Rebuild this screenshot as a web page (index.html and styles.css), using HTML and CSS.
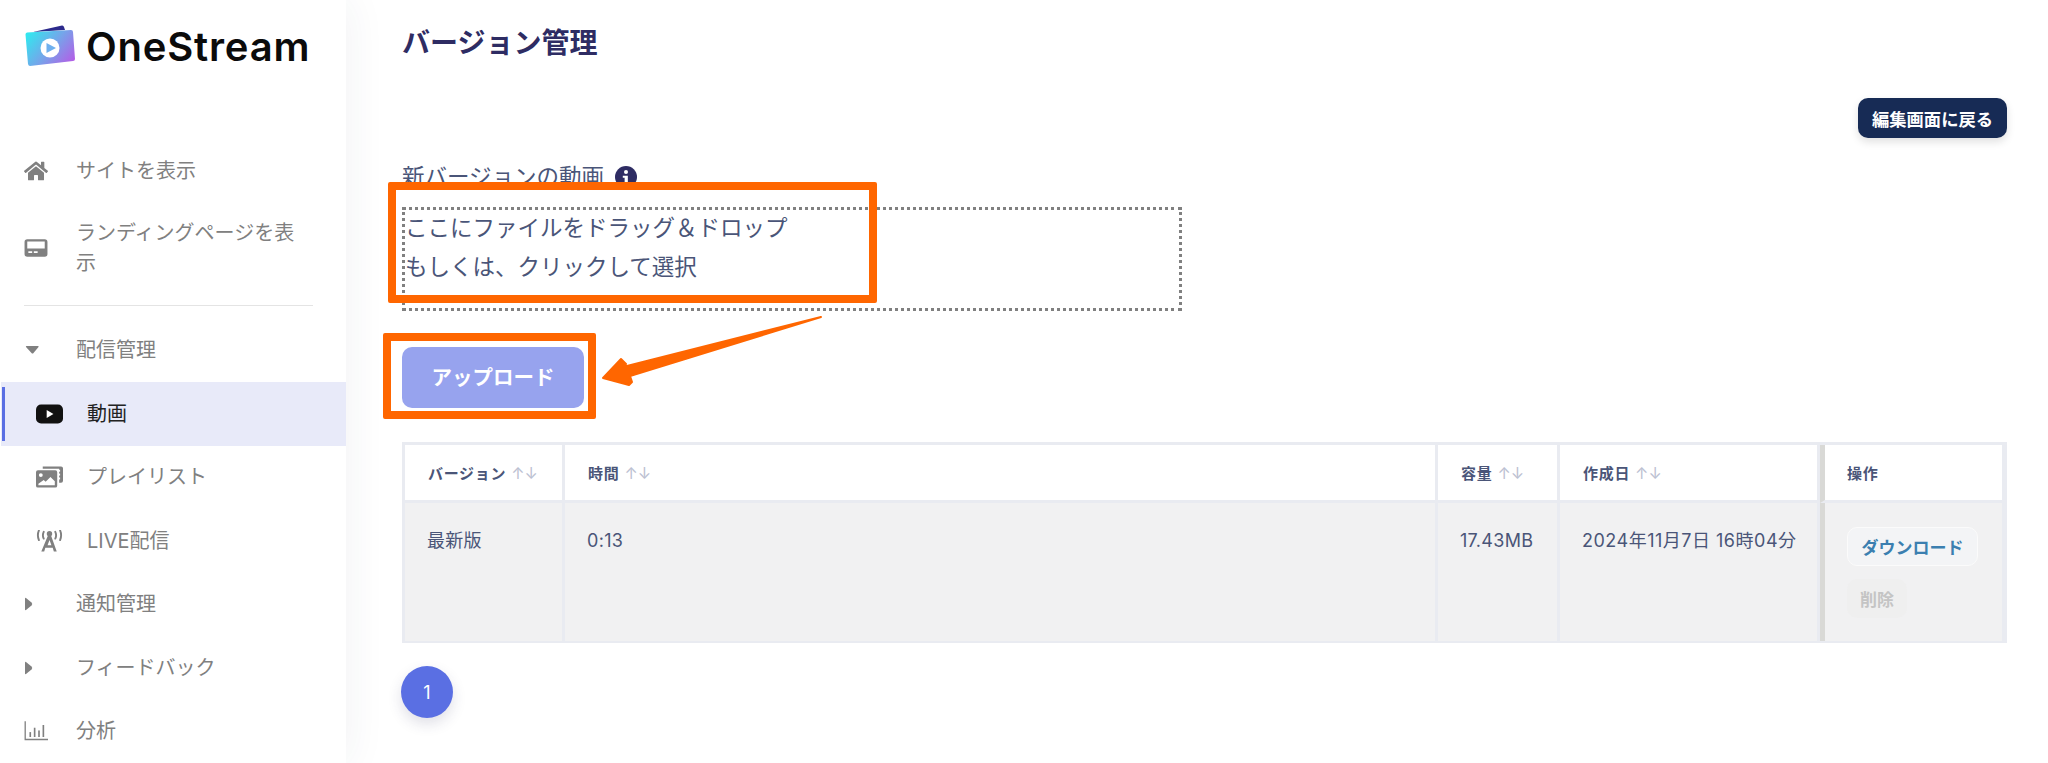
FILE: index.html
```html
<!DOCTYPE html>
<html lang="ja">
<head>
    <meta charset="UTF-8">
    <meta name="viewport" content="width=device-width, initial-scale=1.0">
    <title>バージョン管理</title>
    <link rel="stylesheet" href="styles.css">
</head>
<body>
    <aside class="sidebar">
        <div class="logo">
            <svg class="logo-icon" viewBox="0 0 50 42">
                <defs>
                    <linearGradient id="logoGrad" x1="0" y1="0.2" x2="1" y2="0.8">
                        <stop offset="0" stop-color="#33e6ef"/>
                        <stop offset="0.5" stop-color="#74a6ea"/>
                        <stop offset="1" stop-color="#b25fe6"/>
                    </linearGradient>
                </defs>
                <path d="M8 7 L37 0.5 Q38.500 0.300 39 2 L40 5 Z" fill="#2c2a8c"/>
                <path d="M2 7.500 L46 5 Q48 5 48 7 L50 34 Q50 36 48 36 L5 41 Q3.500 41 3 39 L0.500 9.500 Q0.500 8 2 7.500 Z" fill="url(#logoGrad)"/>
                <circle cx="25" cy="23" r="9.500" fill="#fff"/>
                <path d="M21.500 18 L31 23 L21.500 28 Z" fill="#6fb0ee"/>
            </svg>
            <span class="logo-text">OneStream</span>
        </div>
        <nav class="menu">
            <a class="menu-item">
                <svg class="menu-icon" viewBox="0 0 576 512"><path d="M280.370 148.260L96 300.110V464a16 16 0 0 0 16 16l112.060-.29a16 16 0 0 0 15.920-16V368a16 16 0 0 1 16-16h64a16 16 0 0 1 16 16v95.640a16 16 0 0 0 16 16.050L464 480a16 16 0 0 0 16-16V300L295.670 148.260a12.190 12.190 0 0 0-15.300 0zM571.600 251.470L488 182.560V44.050a12 12 0 0 0-12-12h-56a12 12 0 0 0-12 12v72.610L318.470 43a48 48 0 0 0-61 0L4.340 251.470a12 12 0 0 0-1.600 16.900l25.500 31A12 12 0 0 0 45.150 301l235.220-193.740a12.190 12.190 0 0 1 15.300 0L530.900 301a12 12 0 0 0 16.900-1.600l25.500-31a12 12 0 0 0-1.700-16.930z"/></svg>
                <span>サイトを表示</span>
            </a>
            <a class="menu-item menu-item-tall">
                <svg class="menu-icon" viewBox="0 0 22 18"><path fill-rule="evenodd" d="M3 1h16a2.500 2.500 0 0 1 2.500 2.500v11A2.500 2.500 0 0 1 19 17H3a2.500 2.500 0 0 1-2.500-2.500v-11A2.500 2.500 0 0 1 3 1zM3 3v6.500h16V3zM4 12v1.500h3.500V12zM9 12v1.500h3.500V12z"/></svg>
                <span>ランディングページを表示</span>
            </a>
            <div class="menu-divider"></div>
            <a class="menu-item">
                <svg class="menu-icon" viewBox="0 0 24 22"><path d="M2.500 7h11.500q1 0 .5 1l-5 6q-1 1-2 0l-5.500-6Q1.500 7 2.500 7z"/></svg>
                <span>配信管理</span>
            </a>
            <a class="menu-item menu-sub active">
                <svg class="menu-icon" viewBox="0 0 24 18"><rect y="0.500" width="24" height="17" rx="4.500"/><path d="M9.500 5.500 L15.500 9 L9.500 12.500 Z" fill="#fff"/></svg>
                <span>動画</span>
            </a>
            <a class="menu-item menu-sub">
                <svg class="menu-icon" viewBox="0 0 28 22"><path d="M7 0h19a2 2 0 0 1 2 2v13a2 2 0 0 1-2 2h-2V2.500H7z"/><rect x="22" y="3.500" width="3" height="2" fill="#fff"/><rect x="22" y="7.500" width="3" height="2" fill="#fff"/><rect x="22" y="11.500" width="3" height="2" fill="#fff"/><path fill-rule="evenodd" d="M2 4h18a2 2 0 0 1 2 2v14a2 2 0 0 1-2 2H2a2 2 0 0 1-2-2V6a2 2 0 0 1 2-2zM5 7a2 2 0 1 0 0 4 2 2 0 0 0 0-4zM2.500 19.500h17v-4l-4.500-4.500-5 5-2-2-5.500 4z"/></svg>
                <span>プレイリスト</span>
            </a>
            <a class="menu-item menu-sub">
                <svg class="menu-icon" viewBox="0 0 28 22"><path d="M12.500 5h3l6 17h-3l-1.200-4h-7.600l-1.200 4h-3zM14 10l-2 5.500h4z"/><circle cx="14" cy="3.500" r="2.800"/><path d="M8 1.500a8 8 0 0 0 0 7M20 1.500a8 8 0 0 1 0 7M3 0a13 13 0 0 0 0 10M25 0a13 13 0 0 1 0 10" fill="none" stroke="#808080" stroke-width="2" stroke-linecap="round"/></svg>
                <span>LIVE配信</span>
            </a>
            <a class="menu-item">
                <svg class="menu-icon" viewBox="0 0 24 22"><path d="M1 5.500q0-1 1-.5l5.500 4.500q1.500 1.500 0 3L2 17q-1 .5-1-.5z"/></svg>
                <span>通知管理</span>
            </a>
            <a class="menu-item">
                <svg class="menu-icon" viewBox="0 0 24 22"><path d="M1 5.500q0-1 1-.5l5.500 4.500q1.500 1.500 0 3L2 17q-1 .5-1-.5z"/></svg>
                <span>フィードバック</span>
            </a>
            <a class="menu-item">
                <svg class="menu-icon" viewBox="0 0 22 18"><path d="M0.500 0h1.200v16h20.300v1.500H0.500z"/><rect x="5" y="10" width="1.500" height="4.500"/><rect x="9" y="6" width="1.500" height="8.500"/><rect x="13" y="8.500" width="1.500" height="6"/><rect x="17" y="3.500" width="1.500" height="11"/></svg>
                <span>分析</span>
            </a>
        </nav>
    </aside>

    <main class="content">
        <h1 class="page-title">バージョン管理</h1>
        <div class="top-actions">
            <button class="btn-back">編集画面に戻る</button>
        </div>
        <div class="field-label">
            新バージョンの動画
            <svg class="info-icon" viewBox="0 0 24 24"><circle cx="12" cy="12" r="12" fill="#2e2c63"/><circle cx="12" cy="6.500" r="2.200" fill="#fff"/><path d="M8.500 10.500h5.500v7.500h1.800v2.200H8.500V18h2V12.700h-2z" fill="#fff"/></svg>
        </div>
        <div class="dropzone">
            <div class="drop-text">
                ここにファイルをドラッグ＆ドロップ<br>
                もしくは、クリックして選択
            </div>
        </div>
        <button class="btn-upload">アップロード</button>

        <div class="table-wrap">
            <table class="version-table">
                <colgroup>
                    <col class="col-version">
                    <col class="col-time">
                    <col class="col-size">
                    <col class="col-date">
                    <col class="col-actions">
                </colgroup>
                <thead>
                    <tr>
                        <th>バージョン<span class="sort">↑↓</span></th>
                        <th>時間<span class="sort">↑↓</span></th>
                        <th>容量<span class="sort">↑↓</span></th>
                        <th>作成日<span class="sort">↑↓</span></th>
                        <th class="cell-actions">操作</th>
                    </tr>
                </thead>
                <tbody>
                    <tr>
                        <td>最新版</td>
                        <td>0:13</td>
                        <td>17.43MB</td>
                        <td class="cell-date">2024年11月7日 16時04分</td>
                        <td class="cell-actions">
                            <button class="btn-download">ダウンロード</button>
                            <button class="btn-delete" disabled>削除</button>
                        </td>
                    </tr>
                </tbody>
            </table>
        </div>
        <div class="pagination">
            <span class="page-num">1</span>
        </div>
    </main>

    <!-- 注釈 -->
    <div class="note-box note-drop"></div>
    <div class="note-box note-upload"></div>
    <svg class="note-arrow" viewBox="0 0 240 90">
        <path d="M4 63 L22 44 L27 49 L24 52 L222 2 L31 61 L33 67 L30 70 Z" fill="#ff6600" stroke="#ff6600" stroke-width="2" stroke-linejoin="round"/>
    </svg>
</body>
</html>
```

FILE: styles.css
```css
* {
    box-sizing: border-box;
}
html, body {
    height: 100%;
}
body {
    font-family: "Inter", "Noto Sans CJK JP", sans-serif;
    margin: 0;
    padding: 0;
    display: flex;
    height: 763px;
    overflow: hidden;
    background: #fff;
    color: #4a5578;
    position: relative;
}
button {
    font-family: inherit;
    border: none;
}

/* サイドバー */
.sidebar {
    width: 346px;
    flex-shrink: 0;
    background: #fff;
    box-shadow: 0 0 40px rgba(40, 50, 90, 0.07);
    padding-left: 1px;
}
.logo {
    height: 139px;
    display: flex;
    align-items: flex-start;
    padding: 25px 0 0 24px;
}
.logo-icon {
    width: 50px;
    height: 42px;
    flex-shrink: 0;
}
.logo-text {
    font-size: 40px;
    font-weight: 600;
    color: #0b0b0b;
    line-height: 44px;
    margin-left: 11px;
    letter-spacing: 0.800px;
}
.menu-item {
    display: flex;
    align-items: center;
    min-height: 63.500px;
    padding-left: 23px;
    font-size: 20px;
    line-height: 30px;
    color: #808080;
}
.menu-item span {
    width: 230px;
}
.menu-item-tall {
    min-height: 90px;
}
.menu-icon {
    width: 24px;
    height: 22px;
    margin-right: 28px;
    flex-shrink: 0;
    fill: #808080;
}
.menu-divider {
    height: 1px;
    background: #e4e4e4;
    margin: 12px 33px 13px 23px;
}
.menu-sub {
    padding-left: 35px;
}
.menu-sub .menu-icon {
    width: 27px;
    margin-right: 24px;
}
.active {
    position: relative;
    background: #e8eaf9;
    color: #222;
}
.active::before {
    content: "";
    position: absolute;
    left: 1px;
    top: 5px;
    bottom: 5px;
    width: 3px;
    background: #5a6fe3;
}
.active .menu-icon {
    fill: #111;
}

/* メイン */
.content {
    flex: 1;
    padding: 25px 41px 0 56px;
}
.page-title {
    margin: 0;
    font-size: 28px;
    line-height: 36px;
    font-weight: 700;
    color: #2e2c63;
}
.top-actions {
    display: flex;
    justify-content: flex-end;
    margin-top: 37px;
}
.btn-back {
    width: 149px;
    height: 40px;
    background: #172b55;
    color: #fff;
    font-size: 17.300px;
    font-weight: 700;
    border-radius: 10px;
    box-shadow: 0 4px 8px rgba(0, 0, 0, 0.12);
}
.field-label {
    display: flex;
    align-items: center;
    margin-top: 24px;
    font-size: 22.500px;
    line-height: 30px;
}
.info-icon {
    width: 22px;
    height: 22px;
    margin-left: 11px;
}
.dropzone {
    width: 780px;
    height: 104px;
    margin-top: 15px;
    border: 3px dotted #808080;
    font-size: 22.500px;
    line-height: 39px;
}
.drop-text {
    margin-top: -2px;
}
.btn-upload {
    display: block;
    width: 182px;
    height: 61px;
    margin-top: 36px;
    padding: 0 0 3px;
    background: #97a3ee;
    color: #fff;
    font-size: 20.500px;
    font-weight: 700;
    border-radius: 10px;
}

/* テーブル */
.table-wrap {
    width: 1605px;
    height: 201px;
    margin-top: 34px;
    border: solid #e9ebf1;
    border-width: 3px 5px 2px 3px;
}
.version-table {
    width: 1597px;
    table-layout: fixed;
    border-collapse: separate;
    border-spacing: 0;
}
.col-version { width: 160px; }
.col-time { width: 873px; }
.col-size { width: 122px; }
.col-date { width: 260px; }
.col-actions { width: 182px; }
.version-table th {
    height: 58px;
    padding: 0 0 0 23px;
    background: #fff;
    text-align: left;
    font-size: 15px;
    font-weight: 700;
    letter-spacing: 0.700px;
    border-right: 3px solid #e9ebf1;
    border-bottom: 3px solid #e9ebf1;
}
.version-table td {
    height: 138px;
    padding: 20px 0 0 22px;
    vertical-align: top;
    background: #f1f1f2;
    font-size: 18px;
    line-height: 36px;
    letter-spacing: 0.300px;
    border-right: 3px solid #e9ebf1;
}
.version-table .cell-date {
    letter-spacing: 0.500px;
}
.version-table .cell-actions {
    border-right: none;
    border-left: 5px solid #d9d9d6;
    padding-left: 22px;
}
.sort {
    margin-left: 5px;
    color: #bcc1d2;
    font-size: 16px;
    font-weight: 400;
    letter-spacing: 0;
}
.btn-download {
    display: block;
    width: 131px;
    height: 39px;
    margin-top: 4px;
    background: #f3f4f6;
    border: 1px solid #fbfbfb;
    border-radius: 10px;
    color: #3b7fb0;
    font-size: 17px;
    font-weight: 700;
    padding: 0;
}
.btn-delete {
    display: block;
    width: 60px;
    height: 39px;
    margin-top: 13px;
    background: #efefef;
    border-radius: 10px;
    color: #c4c4c4;
    font-size: 17px;
    font-weight: 700;
    padding: 0;
}
.pagination {
    margin: 23px 0 0 -1px;
}
.page-num {
    display: flex;
    align-items: center;
    justify-content: center;
    width: 52px;
    height: 52px;
    border-radius: 50%;
    background: #5a6fe3;
    color: #fff;
    font-size: 18px;
    box-shadow: 0 6px 14px rgba(50, 50, 93, 0.15);
}

/* 注釈 */
.note-box {
    position: absolute;
    border: 8px solid #ff6600;
    border-radius: 2px;
}
.note-drop {
    left: 388px;
    top: 182px;
    width: 489px;
    height: 121px;
}
.note-upload {
    left: 383px;
    top: 333px;
    width: 213px;
    height: 86px;
}
.note-arrow {
    position: absolute;
    left: 599px;
    top: 315px;
    width: 240px;
    height: 90px;
}
```
